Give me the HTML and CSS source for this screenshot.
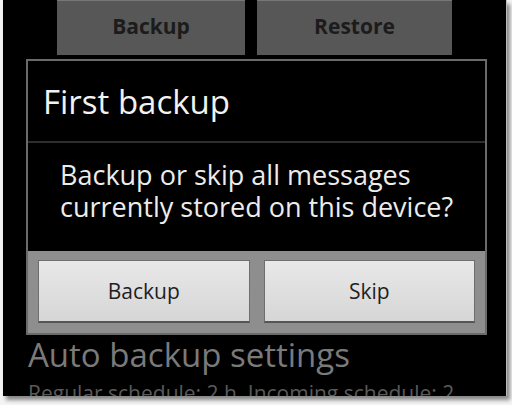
FILE: index.html
```html
<!DOCTYPE html>
<html>
<head>
<meta charset="utf-8">
<link rel="stylesheet" href="styles.css">
</head>
<body>
<div class="screen">
  <div class="tabs">
    <div class="tab tab-backup">Backup</div>
    <div class="tab tab-restore">Restore</div>
  </div>
  <div class="dialog">
    <div class="dialog-title">First backup</div>
    <div class="dialog-msg">
      <p>Backup or skip all messages<br>currently stored on this device?</p>
    </div>
    <div class="dialog-buttons">
      <div class="btn">Backup</div>
      <div class="btn">Skip</div>
    </div>
  </div>
  <div class="pref">
    <div class="pref-title">Auto backup settings</div>
    <div class="pref-sub">Regular schedule: 2 h, Incoming schedule: 2</div>
  </div>
</div>
</body>
</html>
```

FILE: styles.css
```css
html, body {
  margin: 0;
  padding: 0;
  background: #f4f4f4;
}
body {
  width: 512px;
  height: 405px;
  overflow: hidden;
  font-family: "Open Sans", "Noto Sans", sans-serif;
}
.screen {
  margin-left: 3px;
  width: 503px;
  height: 396px;
  background: #000;
  overflow: hidden;
  box-shadow: 3px 4px 4px rgba(0,0,0,0.45);
  border-right: 1px solid #bbb;
}
.tabs {
  display: flex;
  padding-left: 54px;
  gap: 12px;
  height: 55px;
}
.tab {
  background: #575757;
  border-top: 1px solid #777;
  color: #1c1c1c;
  font-weight: 700;
  font-size: 21px;
  display: flex;
  align-items: center;
  justify-content: center;
  padding-bottom: 4px;
  box-sizing: border-box;
}
.tab-backup { width: 188px; }
.tab-restore { width: 195px; }
.dialog {
  margin: 4px 0 0 23px;
  width: 461px;
  border: 2px solid #6a6a6a;
  box-sizing: border-box;
  background: #000;
}
.dialog-title {
  height: 82px;
  color: #f2f2f2;
  font-size: 33px;
  line-height: 40px;
  padding: 21px 0 0 15px;
  box-sizing: border-box;
  border-bottom: 2px solid #2e2e2e;
}
.dialog-msg {
  height: 108px;
  padding: 16px 0 0 32px;
  box-sizing: border-box;
}
.dialog-msg p {
  margin: 0;
  color: #ececec;
  font-size: 27px;
  line-height: 32px;
}
.dialog-buttons {
  background: #8e8e8e;
  display: flex;
  gap: 14px;
  padding: 9px 10px 10px 10px;
}
.btn {
  flex: 1;
  height: 63px;
  background: linear-gradient(#e8e8e8, #d6d6d6);
  border: 1px solid #6e6e6e;
  border-bottom: 2px solid #555;
  box-sizing: border-box;
  display: flex;
  align-items: center;
  justify-content: center;
  color: #1e1e1e;
  font-size: 21px;
}
.pref {
  padding: 1px 0 0 25px;
}
.pref-title {
  color: #7a7a7a;
  font-size: 33px;
  line-height: 38px;
}
.pref-sub {
  margin-top: 7px;
  color: #5a5a5a;
  font-size: 21px;
  line-height: 24px;
  white-space: nowrap;
}
```
